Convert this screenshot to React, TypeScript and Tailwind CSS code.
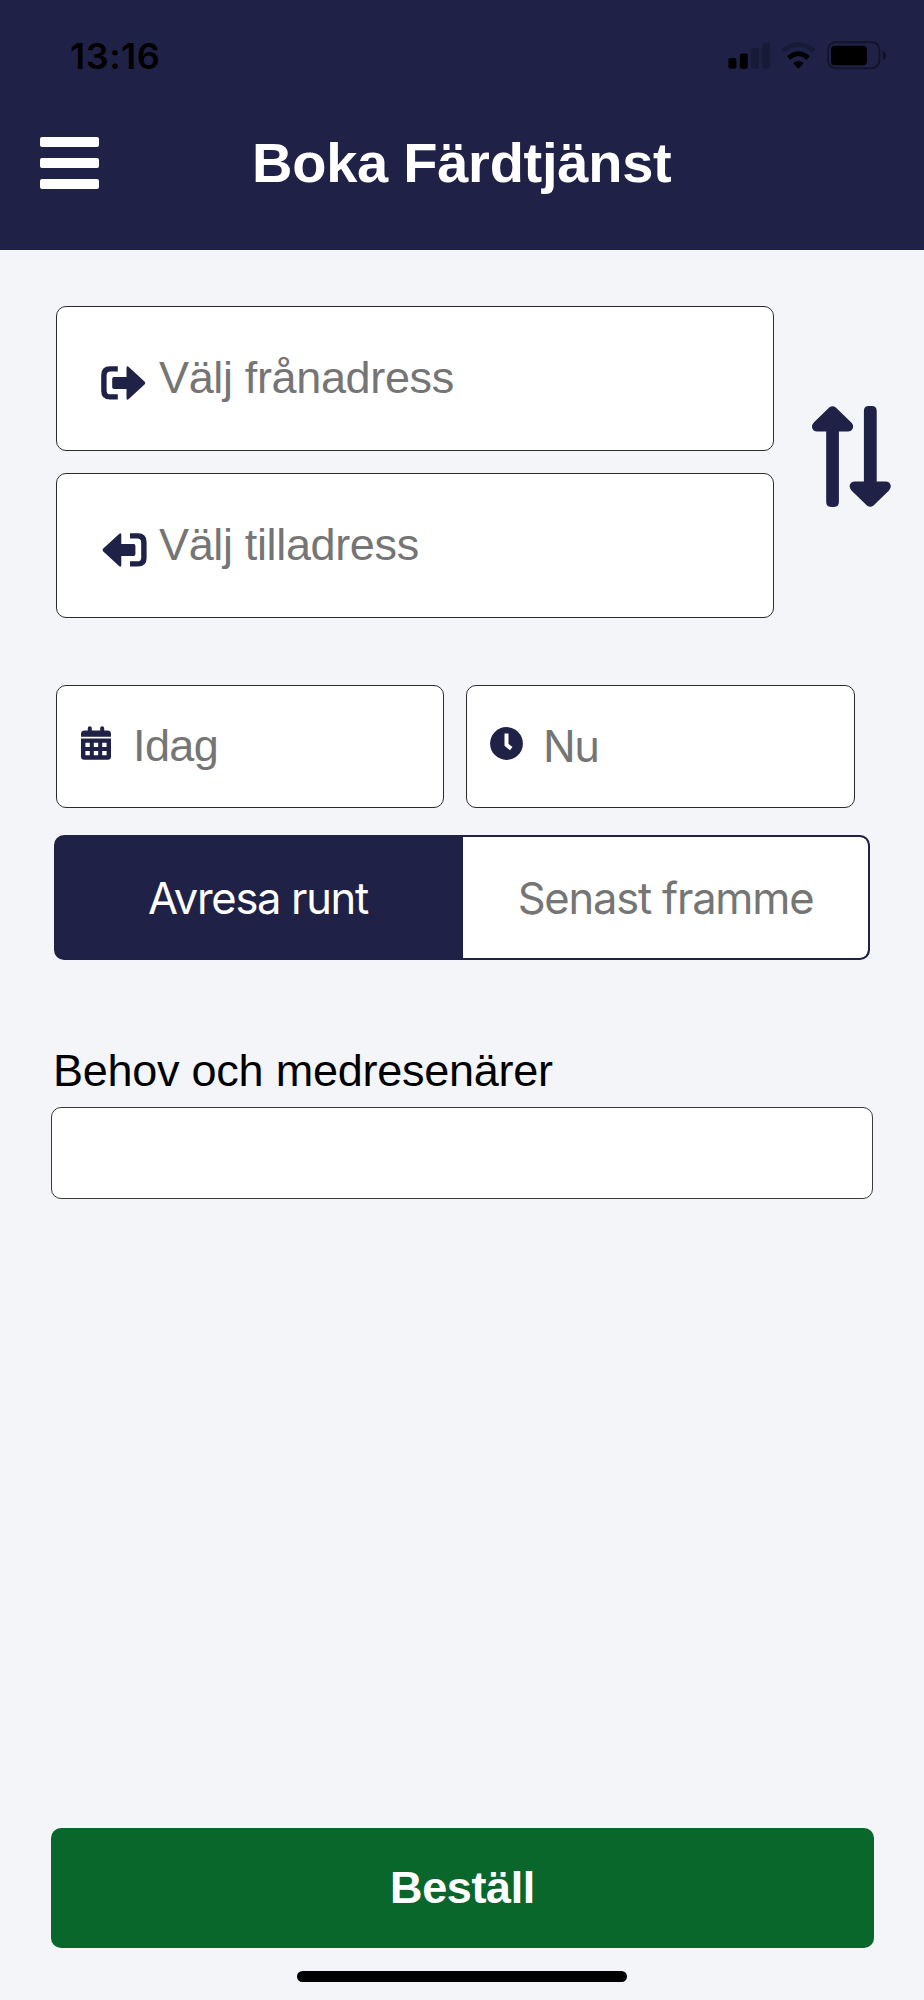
import { useState } from "react";
import type { ReactNode } from "react";

type TimeMode = "departure" | "arrival";

const StatusBar = () => (
  <div className="flex h-28 items-center justify-between pl-[70px] pr-[37px] text-black">
    <span className="font-[Inter,sans-serif] text-[36px] leading-none font-semibold tracking-[0.5px] whitespace-nowrap">
      13:16
    </span>
    <svg
      className="mb-[2px] h-[30px] w-[160px]"
      viewBox="727 40 160 30"
      fill="currentColor">
      {/* signal */}
      <rect x="728.4" y="58" width="8" height="10.8" rx="2" />
      <rect x="739.8" y="53.4" width="8" height="15.4" rx="2" />
      <rect x="751" y="48" width="8" height="20.8" rx="2" opacity="0.2" />
      <rect x="762.2" y="42.6" width="8" height="26.2" rx="2" opacity="0.2" />
      {/* wifi */}
      <path
        d="M782.8 51 Q798.4 38.4 814 51"
        fill="none"
        stroke="currentColor"
        strokeWidth="5"
        opacity="0.2"
      />
      <path
        d="M788.6 58 Q798.4 49.2 808.2 58"
        fill="none"
        stroke="currentColor"
        strokeWidth="4.6"
      />
      <path d="M793.2 63.3 Q798.4 58.7 803.6 63.3 L798.4 68.8 Z" />
      {/* battery */}
      <rect
        x="828"
        y="42.2"
        width="51.4"
        height="26"
        rx="7.5"
        fill="none"
        stroke="currentColor"
        strokeWidth="1.9"
        opacity="0.4"
      />
      <rect x="831" y="45.8" width="36" height="19.4" rx="4" />
      <path d="M882.6 50.6 Q886 52 886 55.4 Q886 59 882.6 60.2 Z" opacity="0.45" />
    </svg>
  </div>
);

const MenuButton = () => (
  <button type="button" aria-label="Meny" className="flex w-[59px] flex-col gap-[11px]">
    <span className="h-[10px] rounded-[2px] bg-white" />
    <span className="h-[10px] rounded-[2px] bg-white" />
    <span className="h-[10px] rounded-[2px] bg-white" />
  </button>
);

const LeaveIcon = () => (
  <svg className="h-[34px] w-[45px]" viewBox="0 0 45 34" fill="currentColor">
    <path d="M16.8 0.3 H9 Q0.2 0.3 0.2 9 V25 Q0.2 33.6 9 33.6 H16.8 V28.3 H9.5 Q5.6 28.3 5.6 24.4 V9.6 Q5.6 5.6 9.5 5.6 H16.8 Z" />
    <path d="M25.5 11 V2 Q25.5 -0.8 28 1.2 L43.5 15.6 Q44.9 17 43.5 18.4 L28 32.8 Q25.5 34.8 25.5 32 V23 H13 Q11.2 23 11.2 21.2 V12.8 Q11.2 11 13 11 Z" />
  </svg>
);

const ArriveIcon = () => (
  <svg className="h-[34px] w-[45px]" viewBox="0 0 45 34" fill="currentColor">
    <path d="M28 0.3 H36 Q44.6 0.3 44.6 9 V25 Q44.6 33.6 36 33.6 H28 V28.3 H35.3 Q39.2 28.3 39.2 24.4 V9.6 Q39.2 5.6 35.3 5.6 H28 Z" />
    <path d="M19.3 11 V2 Q19.3 -0.8 16.8 1.2 L1.3 15.6 Q-0.1 17 1.3 18.4 L16.8 32.8 Q19.3 34.8 19.3 32 V23 H31.6 Q33.4 23 33.4 21.2 V12.8 Q33.4 11 31.6 11 Z" />
  </svg>
);

const SwapIcon = () => (
  <svg className="h-[101px] w-[79px]" viewBox="0 0 79 101" fill="currentColor">
    <path d="M17.2 1.4 Q20.5 -1 23.8 1.4 L39.3 16.5 Q42 19.5 40.7 22.5 Q39.5 25.4 36 25.4 H26.9 V96 Q26.9 100.9 22 100.9 H19 Q14.2 100.9 14.2 96 V25.4 H5 Q1.5 25.4 0.4 22.5 Q-0.8 19.5 1.8 16.5 Z" />
    <path d="M61.5 99.5 Q58.2 101.9 54.9 99.5 L39.4 84.4 Q36.8 81.4 38 78.4 Q39.2 75.4 42.7 75.4 H51.9 V5 Q51.9 0.1 56.8 0.1 H59.8 Q64.7 0.1 64.7 5 V75.4 H73.8 Q77.3 75.4 78.4 78.4 Q79.6 81.4 77 84.4 Z" />
  </svg>
);

const CalendarIcon = () => (
  <svg className="h-[34px] w-[30px]" viewBox="0 0 30 34" fill="currentColor">
    <path d="M0 10.8 V8 Q0 4.5 3.5 4.5 H6.8 V2 Q6.8 0.2 8.8 0.2 Q10.8 0.2 10.8 2 V4.5 H19.2 V2 Q19.2 0.2 21.2 0.2 Q23.2 0.2 23.2 2 V4.5 H26.5 Q30 4.5 30 8 V10.8 Z" />
    <path
      fillRule="evenodd"
      d="M0 12.6 H30 V30.6 Q30 33.8 26.8 33.8 H3.2 Q0 33.8 0 30.6 Z M4.4 16.8 V21 H8.8 V16.8 Z M12.8 16.8 V21 H17.2 V16.8 Z M21.2 16.8 V21 H25.6 V16.8 Z M4.4 25 V29.3 H8.8 V25 Z M12.8 25 V29.3 H17.2 V25 Z M21.2 25 V29.3 H25.6 V25 Z"
    />
  </svg>
);

const ClockIcon = () => (
  <svg className="h-[33px] w-[33px]" viewBox="0 0 33 33">
    <circle cx="16.5" cy="16.5" r="16.4" fill="currentColor" />
    <path d="M16.5 6.4 V17.8 L21.2 21.6" fill="none" stroke="#fff" strokeWidth="4" />
  </svg>
);

interface AddressFieldProps {
  icon: ReactNode;
  label: string;
  className: string;
}

const AddressField = ({ icon, label, className }: AddressFieldProps) => (
  <button
    type="button"
    className={`flex h-[145px] w-[718px] items-center rounded-[10px] border border-[#2b2b2b] bg-white text-[#1f2246] ${className}`}>
    <span className="mt-[9px]">{icon}</span>
    <span className="mb-[2px] text-[45px] leading-none tracking-[-0.35px] whitespace-nowrap text-[#757575]">
      {label}
    </span>
  </button>
);

const App = () => {
  const [mode, setMode] = useState<TimeMode>("departure");

  const segmentClass = (value: TimeMode): string =>
    mode === value ? "bg-[#1f2246] text-white" : "bg-white text-[#757575]";

  return (
    <div className="flex h-[2000px] w-[924px] flex-col overflow-hidden bg-[#f3f5f9] font-['Liberation_Sans',Arial,sans-serif]">
      <header className="h-[250px] shrink-0 bg-[#1f2246]">
        <StatusBar />
        <div className="flex h-[102px] items-center pl-10">
          <MenuButton />
          <h1 className="ml-[153px] text-[56px] leading-none font-bold tracking-[-0.25px] whitespace-nowrap text-white">
            Boka Färdtjänst
          </h1>
        </div>
      </header>

      <main className="flex flex-1 flex-col">
        <section className="mt-14 ml-14 flex items-center">
          <div className="flex flex-col gap-[22px]">
            <AddressField
              icon={<LeaveIcon />}
              label="Välj frånadress"
              className="gap-[13px] pl-[44px]"
            />
            <AddressField
              icon={<ArriveIcon />}
              label="Välj tilladress"
              className="gap-3 pl-[45px]"
            />
          </div>
          <button
            type="button"
            aria-label="Byt adresser"
            className="mb-[11px] ml-[38px] text-[#1f2246]">
            <SwapIcon />
          </button>
        </section>

        <section className="mt-[67px] ml-14 flex gap-[22px]">
          <button
            type="button"
            className="flex h-[123px] w-[388px] items-center rounded-[10px] border border-[#2b2b2b] bg-white pl-6 text-[#1f2246]">
            <span className="mb-[7px]">
              <CalendarIcon />
            </span>
            <span className="mb-[2px] ml-[22px] text-[45px] leading-none tracking-[-0.6px] text-[#757575]">
              Idag
            </span>
          </button>
          <button
            type="button"
            className="flex h-[123px] w-[389px] items-center rounded-[10px] border border-[#2b2b2b] bg-white pl-[23px] text-[#1f2246]">
            <span className="mb-[7px]">
              <ClockIcon />
            </span>
            <span className="ml-[20px] font-[Inter,sans-serif] text-[43.5px] leading-none tracking-[-1.5px] text-[#757575]">
              Nu
            </span>
          </button>
        </section>

        <section className="mt-[27px] ml-[54px] flex h-[125px] w-[816px] overflow-hidden rounded-[10px] border-2 border-[#1f2246] bg-[#1f2246] font-[Inter,sans-serif] text-[43.5px] leading-none whitespace-nowrap">
          <button
            type="button"
            onClick={() => setMode("departure")}
            className={`w-[407px] shrink-0 pt-[2px] pr-[3px] tracking-[-1.3px] ${segmentClass("departure")}`}>
            Avresa runt
          </button>
          <button
            type="button"
            onClick={() => setMode("arrival")}
            className={`flex-1 rounded-r-[8px] pt-[2px] tracking-[-1.2px] ${segmentClass("arrival")}`}>
            Senast framme
          </button>
        </section>

        <section className="mt-[85px] ml-[51px] w-[822px]">
          <h2 className="h-[62px] pl-[2px] text-[45px] leading-[52px] tracking-[-0.25px] whitespace-nowrap text-black">
            Behov och medresenärer
          </h2>
          <button
            type="button"
            aria-label="Behov och medresenärer"
            className="block h-[92px] w-full rounded-[10px] border border-[#3a3a3a] bg-white"
          />
        </section>
      </main>

      <footer className="flex shrink-0 flex-col items-center pb-[18px]">
        <button
          type="button"
          className="ml-px h-[120px] w-[823px] rounded-[10px] bg-[#09672c] pb-[2px] text-[45px] leading-none font-bold tracking-[-0.4px] text-white">
          Beställ
        </button>
        <div className="mt-[23px] h-[11px] w-[330px] rounded-full bg-black" />
      </footer>
    </div>
  );
};

export default App;
